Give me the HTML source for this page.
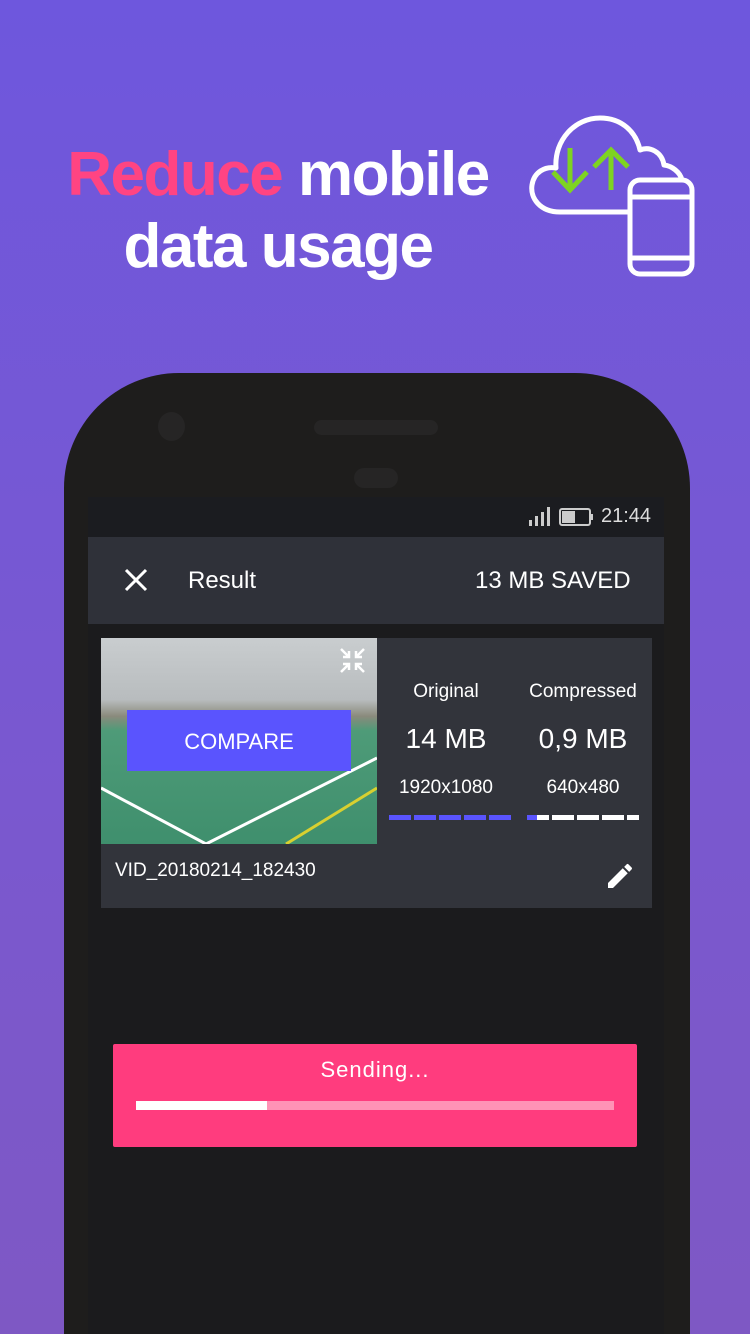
<!DOCTYPE html>
<html><head><meta charset="utf-8"><style>
*{margin:0;padding:0;box-sizing:border-box}
html,body{width:750px;height:1334px;overflow:hidden}
body{position:relative;background:linear-gradient(180deg,#6e57dd 0%,#7a58cf 60%,#7e58c4 100%);font-family:"Liberation Sans",sans-serif}
.h{position:absolute;left:0;width:556px;text-align:center;color:#fff;font-weight:bold;font-size:62px;letter-spacing:-1.5px;line-height:70px}
.phone{position:absolute;left:64px;top:373px;width:626px;height:961px;background:#1e1d1c;border-radius:115px 115px 0 0}
.screen{position:absolute;left:88px;top:497px;width:576px;height:837px;background:#1b1b1d}
.t{position:absolute;color:#fff;white-space:nowrap}
</style></head><body>
<div class="h" style="top:140px"><span style="color:#ff4482">Reduce</span> mobile</div>
<div class="h" style="top:212px">data usage</div>
<svg style="position:absolute;left:520px;top:105px" width="180" height="180" viewBox="520 105 180 180" fill="none" stroke="#fff" stroke-width="5" stroke-linejoin="round">
<path d="M628 212 H560 C540 212 530 198 532 185 C534 172 545 166 556 168 C554 140 575 118 600 118 C622 118 636 132 640 150 C650 146 662 152 664 165 C672 166 680 172 682 180"/>
<rect x="630" y="180" width="62" height="94" rx="10"/>
<line x1="630" y1="197" x2="692" y2="197"/><line x1="630" y1="258" x2="692" y2="258"/>
<g stroke="#7ed321" stroke-width="5" stroke-linejoin="miter"><path d="M570 148 V190 M553 172 L570 190 L587 172"/><path d="M611 190 V150 M594 167 L611 150 L628 167"/></g>
</svg>
<div class="phone"></div>
<div style="position:absolute;left:158px;top:412px;width:27px;height:29px;border-radius:50%;background:#262525"></div>
<div style="position:absolute;left:314px;top:420px;width:124px;height:15px;border-radius:8px;background:#262525"></div>
<div style="position:absolute;left:354px;top:468px;width:44px;height:20px;border-radius:10px;background:#262525"></div>
<div class="screen"></div>
<div style="position:absolute;left:88px;top:497px;width:576px;height:40px;background:#1b1c20"></div>
<svg style="position:absolute;left:528px;top:506px" width="70" height="22"><g fill="#ccc"><rect x="1" y="14" width="3" height="6"/><rect x="7" y="10" width="3" height="10"/><rect x="13" y="6" width="3" height="14"/><rect x="19" y="1" width="3" height="19"/></g><rect x="32" y="3" width="30" height="16" rx="2" stroke="#ccc" stroke-width="2" fill="none"/><rect x="34" y="5" width="13" height="12" fill="#ccc"/><rect x="62" y="8" width="3" height="6" fill="#ccc"/></svg>
<div class="t" style="left:601px;top:505px;font-size:20px;color:#ddd">21:44</div>
<div style="position:absolute;left:88px;top:537px;width:576px;height:87px;background:#2f3139"></div>
<svg style="position:absolute;left:124px;top:568px" width="24" height="24"><path d="M2 2L22 22M22 2L2 22" stroke="#fff" stroke-width="3"/></svg>
<div class="t" style="left:188px;top:567px;font-size:24px">Result</div>
<div class="t" style="left:475px;top:567px;font-size:24px">13 MB SAVED</div>
<div style="position:absolute;left:101px;top:638px;width:551px;height:270px;background:#32343b"></div>
<div style="position:absolute;left:101px;top:638px;width:276px;height:206px;background:linear-gradient(180deg,#c9cdcf 0%,#b8bcbe 30%,#8a8a7c 38%,#4e9b78 45%,#3f8f6d 100%)"></div>
<svg style="position:absolute;left:101px;top:638px" width="276" height="206"><path d="M0 150 L105 206 M105 206 L276 120" stroke="#fff" stroke-width="3"/><path d="M185 206 L276 150" stroke="#d8d030" stroke-width="3"/><g stroke="#fff" stroke-width="2.5" fill="none"><path d="M240 11l8 8M248 13v6h-6M263 11l-8 8M255 13v6h6M240 34l8-8M248 32v-6h-6M263 34l-8-8M255 32v-6h6"/></g></svg>
<div style="position:absolute;left:127px;top:710px;width:224px;height:61px;background:#5a54fe"></div>
<div class="t" style="left:127px;top:729px;width:224px;text-align:center;font-size:22px">COMPARE</div>
<div class="t" style="left:390px;top:681px;width:112px;text-align:center;font-size:19px">Original</div>
<div class="t" style="left:520px;top:681px;width:126px;text-align:center;font-size:19px">Compressed</div>
<div class="t" style="left:390px;top:723px;width:112px;text-align:center;font-size:28px">14 MB</div>
<div class="t" style="left:520px;top:723px;width:126px;text-align:center;font-size:28px">0,9 MB</div>
<div class="t" style="left:390px;top:777px;width:112px;text-align:center;font-size:19px">1920x1080</div>
<div class="t" style="left:520px;top:777px;width:126px;text-align:center;font-size:19px">640x480</div>
<svg style="position:absolute;left:389px;top:815px" width="252" height="6"><g fill="#5a54fe"><rect x="0" width="22" height="5"/><rect x="25" width="22" height="5"/><rect x="50" width="22" height="5"/><rect x="75" width="22" height="5"/><rect x="100" width="22" height="5"/></g><g fill="#fff"><rect x="138" width="22" height="5"/><rect x="163" width="22" height="5"/><rect x="188" width="22" height="5"/><rect x="213" width="22" height="5"/><rect x="238" width="12" height="5"/></g><rect x="138" width="10" height="5" fill="#5a54fe"/></svg>
<div class="t" style="left:115px;top:860px;font-size:19px">VID_20180214_182430</div>
<svg style="position:absolute;left:604px;top:860px" width="32" height="32" viewBox="0 0 24 24"><path d="M3 17.25V21h3.75L17.81 9.94l-3.75-3.75L3 17.25zM20.71 7.04a1 1 0 000-1.41l-2.34-2.34a1 1 0 00-1.41 0l-1.830 1.83 3.75 3.75 1.83-1.83z" fill="#fff"/></svg>
<div style="position:absolute;left:113px;top:1044px;width:524px;height:103px;background:#ff3c7e;border-radius:2px"></div>
<div class="t" style="left:113px;top:1057px;width:524px;text-align:center;font-size:22px;letter-spacing:1px">Sending...</div>
<div style="position:absolute;left:136px;top:1101px;width:478px;height:9px;background:#ff93b6"></div>
<div style="position:absolute;left:136px;top:1101px;width:131px;height:9px;background:#fff"></div>
</body></html>
